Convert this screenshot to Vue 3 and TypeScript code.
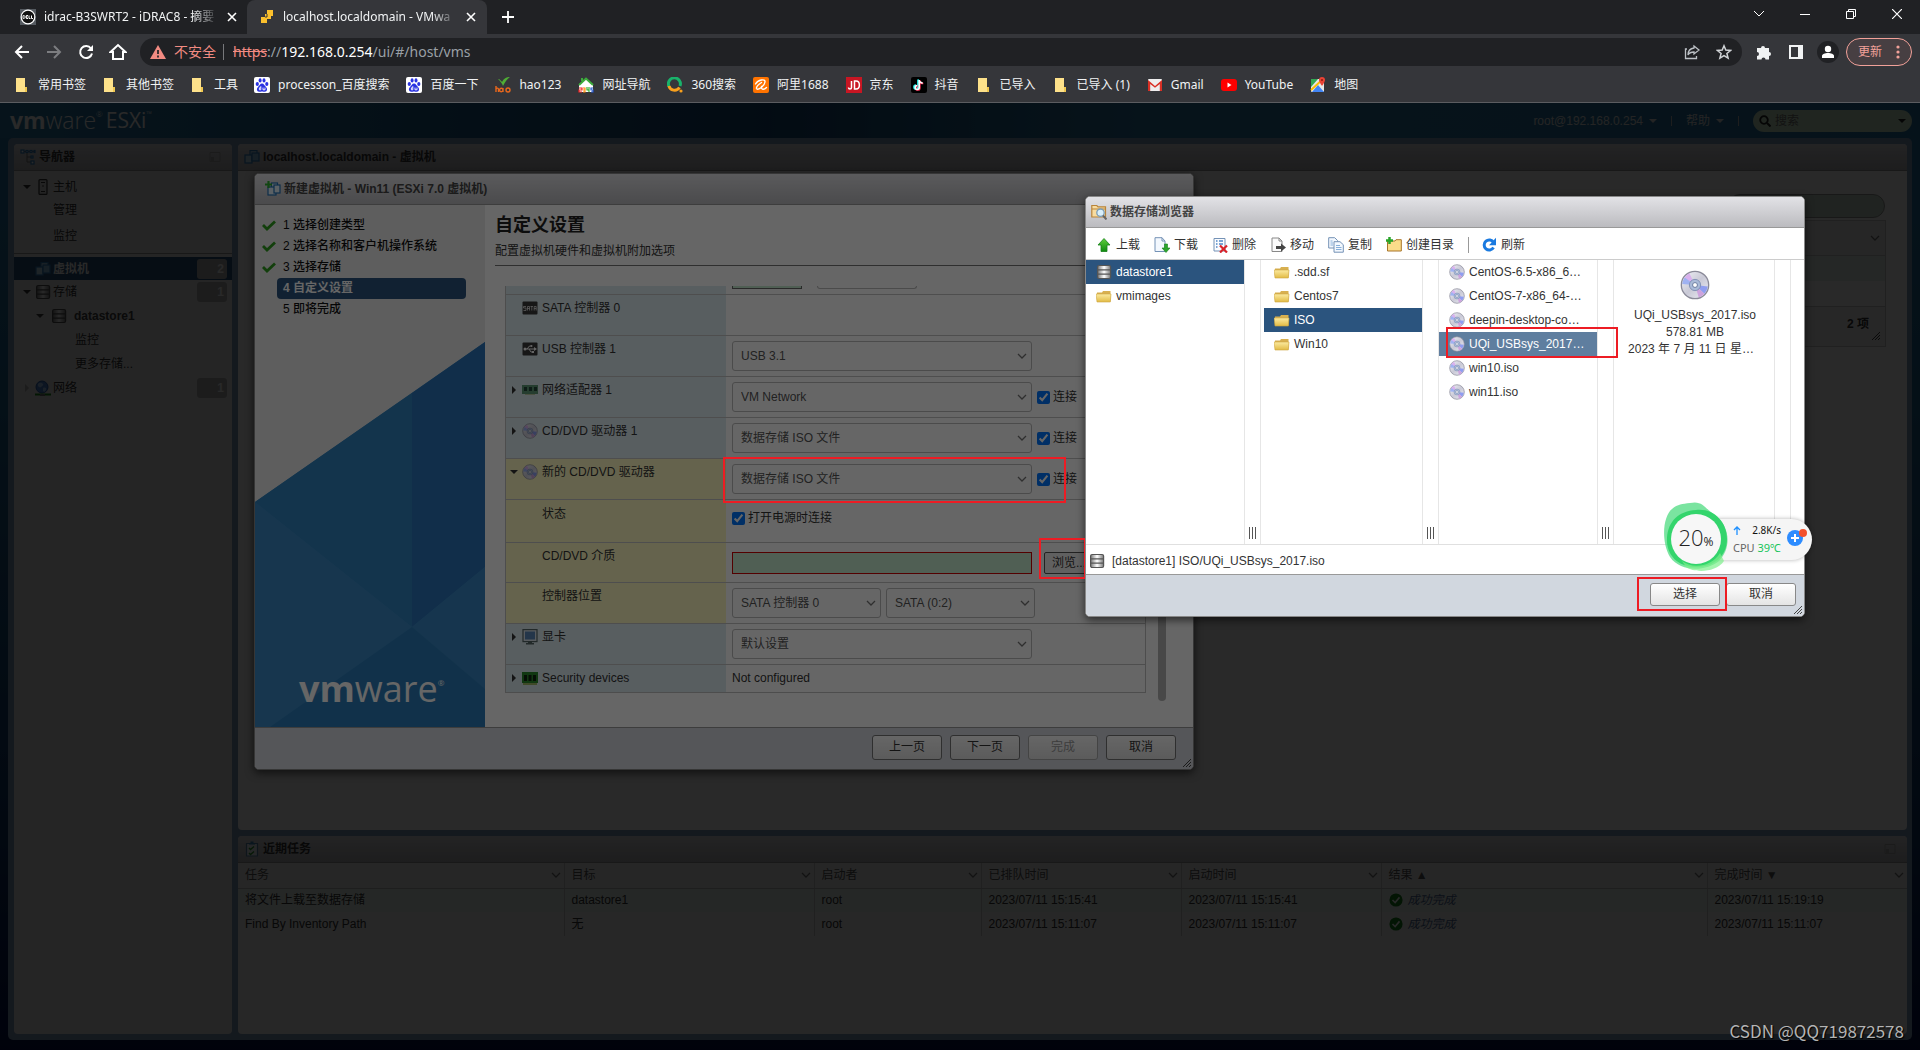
<script setup lang="ts">
import { ref } from 'vue'

interface Bookmark { icon: string; label: string }
interface Step { label: string; state: 'done' | 'active' | 'next' }
interface Task { name: string; target: string; user: string; queued: string; started: string; finished: string; tint: boolean }
interface Entry { label: string; icon: string; state?: string }

const bookmarks: Bookmark[] = [
  { icon: 'bm-folder', label: '常用书签' },
  { icon: 'bm-folder', label: '其他书签' },
  { icon: 'bm-folder', label: '工具' },
  { icon: 'bm-baidu', label: 'processon_百度搜索' },
  { icon: 'bm-baidu', label: '百度一下' },
  { icon: 'bm-hao', label: 'hao123' },
  { icon: 'bm-2345', label: '网址导航' },
  { icon: 'bm-360', label: '360搜索' },
  { icon: 'bm-ali', label: '阿里1688' },
  { icon: 'bm-jd', label: '京东' },
  { icon: 'bm-douyin', label: '抖音' },
  { icon: 'bm-folder', label: '已导入' },
  { icon: 'bm-folder', label: '已导入 (1)' },
  { icon: 'bm-gmail', label: 'Gmail' },
  { icon: 'bm-youtube', label: 'YouTube' },
  { icon: 'bm-maps', label: '地图' }
]

const steps: Step[] = [
  { label: '1 选择创建类型', state: 'done' },
  { label: '2 选择名称和客户机操作系统', state: 'done' },
  { label: '3 选择存储', state: 'done' },
  { label: '4 自定义设置', state: 'active' },
  { label: '5 即将完成', state: 'next' }
]

const tasks: Task[] = [
  { name: '将文件上载至数据存储', target: 'datastore1', user: 'root', queued: '2023/07/11 15:15:41', started: '2023/07/11 15:15:41', finished: '2023/07/11 15:19:19', tint: true },
  { name: 'Find By Inventory Path', target: '无', user: 'root', queued: '2023/07/11 15:11:07', started: '2023/07/11 15:11:07', finished: '2023/07/11 15:11:07', tint: false }
]

const taskColumns = [
  { label: '任务', cls: 'c-name' },
  { label: '目标', cls: 'c-target' },
  { label: '启动者', cls: 'c-user' },
  { label: '已排队时间', cls: 'c-time' },
  { label: '启动时间', cls: 'c-time' },
  { label: '结果 ▲', cls: 'c-result' },
  { label: '完成时间 ▼', cls: 'c-time' }
]

const tools = [
  { icon: 'i-upload', label: '上载' },
  { icon: 'i-download', label: '下载' },
  { icon: 'i-delete', label: '删除' },
  { icon: 'i-move', label: '移动' },
  { icon: 'i-copy', label: '复制' },
  { icon: 'i-newdir', label: '创建目录' }
]

const stores: Entry[] = [
  { label: 'datastore1', icon: 'i-store', state: 'picked' },
  { label: 'vmimages', icon: 'i-folder' }
]
const folders: Entry[] = [
  { label: '.sdd.sf', icon: 'i-folder' },
  { label: 'Centos7', icon: 'i-folder' },
  { label: 'ISO', icon: 'i-folder', state: 'picked' },
  { label: 'Win10', icon: 'i-folder' }
]
const files: Entry[] = [
  { label: 'CentOS-6.5-x86_6…', icon: 'i-disc' },
  { label: 'CentOS-7-x86_64-…', icon: 'i-disc' },
  { label: 'deepin-desktop-co…', icon: 'i-disc' },
  { label: 'UQi_USBsys_2017…', icon: 'i-disc', state: 'current' },
  { label: 'win10.iso', icon: 'i-disc' },
  { label: 'win11.iso', icon: 'i-disc' }
]

const netOn = ref(true)
const cdOn = ref(true)
const newCdOn = ref(true)
const powerOn = ref(true)
const media = ref('')
const search = ref('')
</script>

<template>
  <div class="screen">
    <svg class="sprite" width="0" height="0" aria-hidden="true">
      <defs>
        <linearGradient id="g-disc" x1="0" y1="0" x2="1" y2="1">
          <stop offset="0" stop-color="#f4f4f8" /><stop offset=".5" stop-color="#c9c9d6" /><stop offset="1" stop-color="#eeeef6" />
        </linearGradient>
        <linearGradient id="g-folder" x1="0" y1="0" x2="0" y2="1">
          <stop offset="0" stop-color="#fbeaa0" /><stop offset="1" stop-color="#e2bb45" />
        </linearGradient>
        <linearGradient id="g-metal" x1="0" y1="0" x2="1" y2="0">
          <stop offset="0" stop-color="#777" /><stop offset=".5" stop-color="#fff" /><stop offset="1" stop-color="#777" />
        </linearGradient>
        <linearGradient id="g-green" x1="0" y1="0" x2="0" y2="1">
          <stop offset="0" stop-color="#5fd03c" /><stop offset="1" stop-color="#108a10" />
        </linearGradient>
      </defs>
      <symbol id="bm-folder" viewBox="0 0 16 16"><path d="M2 1h9v9h2v5H2z" fill="#fde18a" /><path d="M11 10h2v5h-2z" fill="#f0c850" /></symbol>
      <symbol id="bm-baidu" viewBox="0 0 16 16"><rect width="16" height="16" rx="2" fill="#fff" /><g fill="#2932e1"><ellipse cx="3.3" cy="7" rx="1.6" ry="2.1" /><ellipse cx="6.1" cy="3.4" rx="1.5" ry="2.1" /><ellipse cx="10" cy="3.4" rx="1.5" ry="2.1" /><ellipse cx="12.8" cy="7" rx="1.6" ry="2.1" /><path d="M8 6.6c2 0 2.300 2 4 3.400 1.800 1.600 1.300 4.600-1.200 4.800-1.200.1-1.600-.3-2.800-.3s-1.600.4-2.800.3c-2.500-.2-3-3.200-1.200-4.800C5.700 8.600 6 6.600 8 6.600z" /></g><path d="M6.800 9.200v3.600H5.400v-2h1.400M9 10.600v2.200h2v-2.200" fill="none" stroke="#fff" stroke-width=".9" /></symbol>
      <symbol id="bm-hao" viewBox="0 0 16 16"><path d="M3 2c2 0 3 2 4 3 2-4 5-5 8-5-3 2-5 5-7 9-1-3-3-5-5-7z" fill="#4fae35" /><path d="M1 9v6m0-3c1-1.500 2.500-1 2.500.5V15M8 15v-4m0 2a1.700 1.700 0 1 1-3.400 0 1.700 1.700 0 0 1 3.400 0zM15 13a2 2 0 1 1-4 0 2 2 0 0 1 4 0z" fill="none" stroke="#e8671c" stroke-width="1.400" /></symbol>
      <symbol id="bm-2345" viewBox="0 0 16 16"><path d="M8 1l7 7v7H1V8z" fill="#fff" /><path d="M1 8l7-6.500L15 8" fill="none" stroke="#3cab3c" stroke-width="2" /><path d="M3 1h2v3H3z" fill="#3cab3c" /><path d="M1 11h3v2H1v2h3" fill="none" stroke="#e22" stroke-width="1.200" /><path d="M5 11h2v4H5m0-2h2" fill="none" stroke="#f80" stroke-width="1.100" /><path d="M9 10v3h2m0-3v5" fill="none" stroke="#2a2" stroke-width="1.100" /><path d="M15 11h-2v2h2v2h-2" fill="none" stroke="#25c" stroke-width="1.200" /></symbol>
      <symbol id="bm-360" viewBox="0 0 16 16"><path d="M2 9.500A6 6 0 1 1 13 9" fill="none" stroke="#19b36b" stroke-width="3" /><path d="M2 9c1 4.500 7.500 6 10.500 1.500" fill="none" stroke="#f8a01d" stroke-width="3" /><circle cx="14" cy="14" r="1.600" fill="#f8a01d" /></symbol>
      <symbol id="bm-ali" viewBox="0 0 16 16"><rect width="16" height="16" rx="2" fill="#ff7300" /><path d="M2.500 7C5 2.500 12.500 1.500 12 5c-.5 4-7.500 9-8.500 6.500C3 9 8.500 5.500 8.500 5.500M8.500 9.500c-.5 3.500 2.500 3.500 5 1" fill="none" stroke="#fff" stroke-width="1.400" stroke-linecap="round" /></symbol>
      <symbol id="bm-jd" viewBox="0 0 16 16"><rect width="16" height="16" fill="#c81623" /><path d="M5.500 4v6.500c0 2-3 2-3 0M8.500 4v8h1.500c4.500 0 4.500-8 0-8z" fill="none" stroke="#fff" stroke-width="1.500" /></symbol>
      <symbol id="bm-douyin" viewBox="0 0 16 16"><rect width="16" height="16" rx="2" fill="#000" /><path d="M7.500 3v7.500a2 2 0 1 1-2-2M7.500 3c.3 2 2 3 3.500 3" transform="translate(-.5 -.5)" fill="none" stroke="#25f4ee" stroke-width="1.700" /><path d="M8.500 3v7.500a2 2 0 1 1-2-2M8.500 3c.3 2 2 3 3.500 3" transform="translate(.3 .5)" fill="none" stroke="#fe2c55" stroke-width="1.700" /><path d="M8.200 3v7.500a2 2 0 1 1-2-2M8.200 3c.3 2 2 3 3.500 3" fill="none" stroke="#fff" stroke-width="1.600" /></symbol>
      <symbol id="bm-gmail" viewBox="0 0 16 16"><rect x="1" y="2" width="14" height="12" rx="1" fill="#eee" /><path d="M1 3l7 6 7-6v11h-2.200V7L8 10.800 3.200 7v7H1z" fill="#d93025" /></symbol>
      <symbol id="bm-youtube" viewBox="0 0 16 16"><rect x="0" y="2" width="16" height="12" rx="3" fill="#f00" /><path d="M6.500 5.500v5l4-2.500z" fill="#fff" /></symbol>
      <symbol id="bm-maps" viewBox="0 0 16 16"><rect x="1" y="2" width="13" height="13" rx="1" fill="#e8e8e8" /><path d="M1 2h7L1 10z" fill="#34a853" /><path d="M2 15l6-7 6 7z" fill="#4285f4" /><path d="M1 13L12 3" stroke="#fbbc04" stroke-width="2" /><path d="M12 0a3 3 0 0 1 3 3c0 2-3 6-3 6S9 5 9 3a3 3 0 0 1 3-3z" fill="#ea4335" /><circle cx="12" cy="3" r="1" fill="#8c1a11" /></symbol>
      <symbol id="i-chev" viewBox="0 0 10 10"><path d="M1 3l4 4 4-4" fill="none" stroke="#777" stroke-width="1.300" /></symbol>
      <symbol id="i-down" viewBox="0 0 8 8"><path d="M0 2h8L4 6z" fill="currentColor" /></symbol>
      <symbol id="i-right" viewBox="0 0 8 8"><path d="M2 0v8l4-4z" fill="currentColor" /></symbol>
      <symbol id="i-vms" viewBox="0 0 16 16"><g fill="#bfe0f5" stroke="#2f80c0" stroke-width="1.200"><rect x="6" y="1.600" width="7" height="7" /><rect x="1" y="6" width="7" height="8" /><rect x="8" y="4" width="7" height="8" fill="#8cc4ea" /></g></symbol>
      <symbol id="i-newvm" viewBox="0 0 16 16"><g fill="#e3f2fc" stroke="#2272b8" stroke-width="1.200"><rect x="6.500" y="2" width="6" height="7" /><rect x="3" y="6" width="8" height="8" /><rect x="9" y="4" width="6" height="8" /></g><path d="M3.500 0v7M0 3.500h7" stroke="#2fb02f" stroke-width="2.200" /></symbol>
      <symbol id="i-tree" viewBox="0 0 16 16"><path d="M4 2.500h10M7 3v10h4M7 8h4" fill="none" stroke="#777" /><g fill="#fff" stroke="#2f80c0" stroke-width="1.200"><rect x="1" y="1" width="3" height="3" /><rect x="6" y="1.500" width="2" height="2" /><rect x="10" y="1.500" width="2" height="2" /><rect x="14" y="1.500" width="1" height="2" /><rect x="11" y="7" width="2" height="2" /><rect x="11" y="12" width="3" height="3" /></g></symbol>
      <symbol id="i-host" viewBox="0 0 16 16"><rect x="4" y=".6" width="8" height="14.800" rx="1" fill="#ddd" stroke="#333" stroke-width="1.200" /><path d="M6 3.500h4" stroke="#333" /><circle cx="8" cy="7" r=".8" fill="#333" /><path d="M6 12.500h4" stroke="#333" /></symbol>
      <symbol id="i-store" viewBox="0 0 16 16"><rect x="1.600" y="1.500" width="13" height="13" rx="1.500" fill="url(#g-metal)" stroke="#555" stroke-width="1.200" /><path d="M2 5.800h12M2 10.200h12" stroke="#555" stroke-width="1.200" /></symbol>
      <symbol id="i-globe" viewBox="0 0 16 16"><circle cx="7" cy="7" r="6" fill="#4c86d8" stroke="#2a5cab" /><path d="M3 4c2-2 4-1 5 0s-1 2-2 3-2 0-3-1zM8 8c2-1 4 0 3 2s-2 2-3 1z" fill="#a9cdf5" /><path d="M0 14.500h16" stroke="#178f17" stroke-width="2" /><path d="M5 14h5v2H5z" fill="#777" /></symbol>
      <symbol id="i-sata" viewBox="0 0 16 16"><rect x=".5" y="1.500" width="15" height="13" rx="1" fill="#3a3a3a" /><path d="M4 6.500H1.500V8H4v2.500H1.500M5.500 10.500v-4h2v4M5.500 8.500h2M8.500 6.500H11M9.800 6.500v4M12.200 10.500v-4h2v4M12.200 8.500h2" fill="none" stroke="#fff" stroke-width=".7" /></symbol>
      <symbol id="i-usb" viewBox="0 0 16 16"><rect x=".5" y="1.500" width="15" height="13" rx="1" fill="#3a3a3a" /><path d="M2 8h11M5 8l2.500-3H9M7 8l2 3h2" fill="none" stroke="#fff" /><circle cx="3" cy="8" r="1.500" fill="#fff" /><path d="M12 6l3 2-3 2z" fill="#fff" /><circle cx="9.500" cy="5" r="1" fill="#fff" /><path d="M10 10h2v2h-2z" fill="#fff" /></symbol>
      <symbol id="i-nic" viewBox="0 0 16 16"><path d="M0 3h16v9H0z" fill="#5d9a75" /><path d="M2 5h3v4H2zM7 5h3v4H7zM12 5h3v4h-3z" fill="#24463a" /><path d="M3 12h10v1H3z" fill="#b9c9a0" /></symbol>
      <symbol id="i-mem" viewBox="0 0 16 16"><path d="M0 2h16v11H0z" fill="#2c8a2c" /><path d="M2 5h3v6H2zM6.500 5h3v6h-3zM11 5h3v6h-3z" fill="#10240f" /><path d="M1 14h14" stroke="#8ca838" stroke-width="1.500" /></symbol>
      <symbol id="i-monitor" viewBox="0 0 16 16"><rect x="1" y=".6" width="14" height="12" fill="#dce4ec" stroke="#566" stroke-width="1.200" /><rect x="3" y="2.500" width="10" height="8" fill="#5a88b8" /><path d="M6 12.500h4V14h2v1.500H4V14h2z" fill="#566" /></symbol>
      <symbol id="i-disc" viewBox="0 0 16 16"><circle cx="8" cy="8" r="7.300" fill="url(#g-disc)" stroke="#8a8a98" stroke-width=".7" /><path d="M8 8L2 4.500A7 7 0 0 1 5 1.700z" fill="#d9b1ee" /><path d="M8 8L1.200 7.500A7 7 0 0 1 2.500 4z" fill="#9fb2f2" /><path d="M8 8l6.800.8A7 7 0 0 1 13 12.700z" fill="#8f9df0" /><path d="M8 8l5 4.700A7 7 0 0 1 10 14.700z" fill="#cda3dd" /><circle cx="8" cy="8" r="3" fill="#a9bad8" stroke="#8090b4" stroke-width=".5" /><circle cx="8" cy="8" r="1.300" fill="#fff" stroke="#66779c" stroke-width=".5" /></symbol>
      <symbol id="i-folder" viewBox="0 0 16 16"><path d="M1 4.500h5l1-1.500h7.500v10.500H1z" fill="#d8b050" /><path d="M0 6h15l-.7 8H1z" fill="url(#g-folder)" stroke="#cfa640" stroke-width=".6" /></symbol>
      <symbol id="i-check" viewBox="0 0 14 14"><path d="M1 6l4 4 8-7.500" fill="none" stroke="#2f9e1e" stroke-width="2.800" /></symbol>
      <symbol id="i-ok" viewBox="0 0 16 16"><circle cx="8" cy="8" r="7.500" fill="#18841c" /><path d="M4 8l3 3 5-6" fill="none" stroke="#fff" stroke-width="1.800" /></symbol>
      <symbol id="i-tasks" viewBox="0 0 16 16"><path d="M2.500 2.500h11v12.500h-11z" fill="#eef4fa" stroke="#5a86ac" stroke-width="1.200" /><path d="M5 3.500h6V2H9.500V.5h-3V2H5z" fill="#3a86c0" /><path d="M5 7l1.500 1.500L10 5.500M5 12l1.500 1.500L10 10.500" fill="none" stroke="#2c9a2c" stroke-width="1.400" /></symbol>
      <symbol id="i-browse" viewBox="0 0 16 16"><path d="M.8 13V1.500h5l1.200 1.300h7.500V13z" fill="#f8dca0" stroke="#b8843a" stroke-width="1.200" /><path d="M1 5h13" stroke="#b8843a" /><circle cx="9.500" cy="8.700" r="3.700" fill="#d8effb" stroke="#7b9cb5" stroke-width="1.300" /><path d="M12 11.500l3.500 4" stroke="#666" stroke-width="2" /></symbol>
      <symbol id="i-upload" viewBox="0 0 16 16"><path d="M8 1.500l6 6.500h-3v6.500H5V8H2z" fill="url(#g-green)" stroke="#18801a" stroke-width=".8" /></symbol>
      <symbol id="i-download" viewBox="0 0 16 16"><path d="M1 .7h7l3 3.300v10.500H1z" fill="#f3f8fe" stroke="#7492b6" /><path d="M8 .7V4h3" fill="none" stroke="#7492b6" /><path d="M10.500 7h3v4H16l-4 4.500L8 11h2.500z" fill="#2ca52c" stroke="#17801a" stroke-width=".6" /></symbol>
      <symbol id="i-delete" viewBox="0 0 16 16"><path d="M2 1.500h11V14H2z" fill="#fafcff" stroke="#7492b6" /><path d="M4 4h1.500M7 4h4M4 7h1.500M7 7h4M4 10h1.500" stroke="#4f86c6" stroke-width="1.300" /><path d="M8 8.500l7 7m0-7l-7 7" stroke="#d8232a" stroke-width="2.200" /></symbol>
      <symbol id="i-move" viewBox="0 0 16 16"><path d="M2 1h7l3 3v10.500H2z" fill="#fafafa" stroke="#888" /><path d="M9 1v3h3" fill="none" stroke="#888" /><path d="M6 9h5V6.500l5 4-5 4V12H6z" fill="#444" /></symbol>
      <symbol id="i-copy" viewBox="0 0 16 16"><path d="M.7.700h6l3 3V11h-9z" fill="#f3f8fe" stroke="#7492b6" /><path d="M6 4.700h6l3.300 3v7.500H6z" fill="#f3f8fe" stroke="#7492b6" /><path d="M8 8.500h4M8 10.500h5.500M8 12.500h5.500M2.500 4h2M2.500 6h2.500M2.500 8h2.500" stroke="#7aa6d6" stroke-width=".9" /></symbol>
      <symbol id="i-newdir" viewBox="0 0 16 16"><path d="M1.500 14V4H9l1-1.300h5.300V14z" fill="#fbdc8a" stroke="#a8752a" /><path d="M3.500 0v7M0 3.500h7" stroke="#28a428" stroke-width="2.500" /></symbol>
      <symbol id="i-refresh" viewBox="0 0 16 16"><path d="M12.500 10.500a5 5 0 1 1 0-5" fill="none" stroke="#1a7ae0" stroke-width="3" /><path d="M15 .8v7.400H8z" fill="#1a7ae0" /></symbol>
      <symbol id="i-panel" viewBox="0 0 12 12"><path d="M1 1.500h10v9H1z" fill="none" stroke="#aaa" /><path d="M2 6h3v4H2z" fill="#aaa" /></symbol>
      <symbol id="i-grip" viewBox="0 0 8 8"><path d="M0 8l8-8M3 8l5-5M6 8l2-2" stroke="#444" fill="none" /></symbol>
    </svg>

    <header class="browser">
      <div class="tabs">
        <div class="tab">
          <svg width="16" height="16" viewBox="0 0 16 16"><rect width="16" height="16" fill="#555a60" /><circle cx="8" cy="8" r="6.800" fill="#111" stroke="#fff" stroke-width="1.200" /><path d="M3 6.500v3h.6c2 0 2-3 0-3zM8 6.500H6.300v3H8M6.300 8h1.400M9 6.500v3h1.500M11.500 6.500v3H13" fill="none" stroke="#fff" stroke-width="1" /></svg>
          <span class="tab-title">idrac-B3SWRT2 - iDRAC8 - 摘要</span>
          <button class="plain" aria-label="关闭标签页"><svg width="10" height="10" viewBox="0 0 10 10"><path d="M1 1l8 8m0-8L1 9" stroke="#fff" stroke-width="1.600" /></svg></button>
        </div>
        <div class="tab current">
          <svg width="16" height="16" viewBox="0 0 16 16"><path d="M8 1h6v6h-2v3H8v4H2V8h4V5h2z" fill="#fbc02d" /><path d="M8 5v3H6" fill="none" stroke="#35363a" /></svg>
          <span class="tab-title">localhost.localdomain - VMwa</span>
          <button class="plain" aria-label="关闭标签页"><svg width="10" height="10" viewBox="0 0 10 10"><path d="M1 1l8 8m0-8L1 9" stroke="#fff" stroke-width="1.600" /></svg></button>
        </div>
        <button class="plain plus" aria-label="新标签页"><svg width="12" height="12" viewBox="0 0 12 12"><path d="M6 0v12M0 6h12" stroke="#fff" stroke-width="1.800" /></svg></button>
        <div class="window-buttons">
          <button class="plain" aria-label="搜索标签页"><svg width="10" height="10" viewBox="0 0 10 10"><path d="M0 2l5 5 5-5" fill="none" stroke="#fff" /></svg></button>
          <button class="plain" aria-label="最小化"><svg width="10" height="10" viewBox="0 0 10 10"><path d="M0 5.500h10" stroke="#fff" /></svg></button>
          <button class="plain" aria-label="还原"><svg width="10" height="10" viewBox="0 0 10 10"><path d="M.5 2.500h7v7h-7zM2.500 2.500v-2h7v7h-2" fill="none" stroke="#fff" /></svg></button>
          <button class="plain" aria-label="关闭"><svg width="10" height="10" viewBox="0 0 10 10"><path d="M0 0l10 10M10 0L0 10" stroke="#fff" stroke-width="1.200" /></svg></button>
        </div>
      </div>
      <div class="toolbar">
        <div class="nav-buttons">
          <button class="plain" aria-label="后退"><svg width="16" height="16" viewBox="0 0 16 16"><path d="M15 8H2M8 2L2 8l6 6" fill="none" stroke="#fff" stroke-width="2" /></svg></button>
          <button class="plain" aria-label="前进"><svg width="16" height="16" viewBox="0 0 16 16"><path d="M1 8h13M8 2l6 6-6 6" fill="none" stroke="#7c7d80" stroke-width="2" /></svg></button>
          <button class="plain" aria-label="重新加载"><svg width="16" height="16" viewBox="0 0 16 16"><path d="M13 4.500A6 6 0 1 0 14 9.500" fill="none" stroke="#fff" stroke-width="2" /><path d="M15 1v6H9z" fill="#fff" /></svg></button>
          <button class="plain" aria-label="主页"><svg width="18" height="18" viewBox="0 0 18 18"><path d="M1.500 9L9 2l7.500 7H14v7H4V9z" fill="none" stroke="#fff" stroke-width="2" /></svg></button>
        </div>
        <div class="omnibox">
          <svg width="16" height="16" viewBox="0 0 16 16"><path d="M8 1l8 14H0z" fill="#f28b82" /><path d="M8 6v4M8 11.500v2" stroke="#202124" stroke-width="1.700" /></svg>
          <span class="insecure">不安全</span>
          <span class="url"><s>https</s>://<b>192.168.0.254</b>/ui/#/host/vms</span>
          <button class="plain share" aria-label="分享"><svg width="16" height="16" viewBox="0 0 16 16"><path d="M3 5H1.500v9.500h11V12" fill="none" stroke="#bdc1c6" stroke-width="1.300" /><path d="M10 2l5 4-5 4V8C7 8 5 9 4 11c0-4 2-6.500 6-7z" fill="none" stroke="#bdc1c6" stroke-width="1.300" /></svg></button>
          <button class="plain" aria-label="为此标签页添加书签"><svg width="16" height="16" viewBox="0 0 16 16"><path d="M8 1.800l1.800 4.300 4.700.4-3.600 3 1.200 4.600L8 11.600l-4.100 2.500 1.200-4.600-3.600-3 4.700-.4z" fill="none" stroke="#d0d3d6" stroke-width="1.500" /></svg></button>
        </div>
        <button class="plain ext" aria-label="扩展程序"><svg width="16" height="16" viewBox="0 0 16 16"><path d="M1 4h4a2 2 0 1 1 4 0h4v4a2 2 0 1 1 0 4v3.500H9.500a2 2 0 1 0-4 0H1V12a2 2 0 1 0 0-4z" fill="#f1f3f4" /></svg></button>
        <button class="plain ext" aria-label="侧边栏"><svg width="14" height="14" viewBox="0 0 14 14"><path d="M1 1h12v12H1z" fill="none" stroke="#f1f3f4" stroke-width="2" /><path d="M9 1h4v12H9z" fill="#f1f3f4" /></svg></button>
        <button class="plain avatar" aria-label="个人资料"><svg width="22" height="22" viewBox="0 0 22 22"><circle cx="11" cy="11" r="11" fill="#202124" /><circle cx="11" cy="8" r="3.200" fill="#fff" /><path d="M5 17v-2c0-4 12-4 12 0v2z" fill="#fff" /></svg></button>
        <button class="update">更新<svg width="4" height="14" viewBox="0 0 4 14"><g fill="#f2a199"><circle cx="2" cy="2" r="1.600" /><circle cx="2" cy="7" r="1.600" /><circle cx="2" cy="12" r="1.600" /></g></svg></button>
      </div>
      <nav class="bookmarks">
        <a v-for="(b, i) in bookmarks" :key="i" href="#"><svg width="16" height="16"><use :href="'#' + b.icon" /></svg>{{ b.label }}</a>
      </nav>
    </header>

    <main class="app">
      <div class="topbar">
        <div class="brand"><b>vm</b>ware<sup>®</sup><span>ESXi</span><sup>™</sup></div>
        <div class="account">
          <a href="#">root@192.168.0.254<svg width="8" height="8"><use href="#i-down" /></svg></a>
          <a href="#">帮助<svg width="8" height="8"><use href="#i-down" /></svg></a>
          <label class="search"><svg width="12" height="12" viewBox="0 0 12 12"><circle cx="5" cy="5" r="3.800" fill="none" stroke="#222" stroke-width="1.800" /><path d="M8 8l3.500 3.500" stroke="#222" stroke-width="2" /></svg>
            <input v-model="search" type="text" placeholder="搜索" aria-label="搜索" /><svg width="8" height="8"><use href="#i-down" /></svg></label>
        </div>
      </div>

      <div class="workspace">
        <aside class="panel navigator">
          <h2><svg width="16" height="16"><use href="#i-tree" /></svg>导航器<svg class="pin" width="12" height="12"><use href="#i-panel" /></svg></h2>
          <ul class="tree host-tree">
            <li class="row-a"><svg width="8" height="8"><use href="#i-down" /></svg><svg width="16" height="16"><use href="#i-host" /></svg>主机</li>
            <li class="leaf">管理</li>
            <li class="leaf last">监控</li>
          </ul>
          <ul class="tree">
            <li class="row-a chosen"><i class="nub"></i><svg width="16" height="16"><use href="#i-vms" /></svg>虚拟机<span class="badge">2</span></li>
            <li class="row-a"><svg width="8" height="8"><use href="#i-down" /></svg><svg width="16" height="16"><use href="#i-store" /></svg>存储<span class="badge">1</span></li>
            <li class="row-b"><svg width="8" height="8"><use href="#i-down" /></svg><svg width="16" height="16"><use href="#i-store" /></svg>datastore1</li>
            <li class="deep">监控</li>
            <li class="deep">更多存储...</li>
            <li class="row-a"><svg class="faint" width="8" height="8"><use href="#i-right" /></svg><svg width="16" height="16"><use href="#i-globe" /></svg>网络<span class="badge">1</span></li>
          </ul>
        </aside>

        <div class="center">
          <section class="panel vm-panel">
            <h2><svg width="16" height="16"><use href="#i-vms" /></svg>localhost.localdomain - 虚拟机</h2>
            <div class="vm-body">
              <div class="vm-search"></div>
              <div class="vm-grid">
                <div class="vm-head"><svg width="10" height="10"><use href="#i-chev" /></svg></div>
                <div class="vm-row tint"></div>
                <div class="vm-row"></div>
                <div class="vm-foot">2 项<svg width="8" height="8"><use href="#i-grip" /></svg></div>
              </div>
            </div>
          </section>

          <section class="panel tasks">
            <h2><svg width="16" height="16"><use href="#i-tasks" /></svg>近期任务<svg class="pin" width="12" height="12"><use href="#i-panel" /></svg></h2>
            <table>
              <thead>
                <tr><th v-for="c in taskColumns" :key="c.label" :class="c.cls"><span>{{ c.label }}<svg width="10" height="10"><use href="#i-chev" /></svg></span></th></tr>
              </thead>
              <tbody>
                <tr v-for="t in tasks" :key="t.name" :class="{ tint: t.tint }">
                  <td>{{ t.name }}</td><td>{{ t.target }}</td><td>{{ t.user }}</td><td>{{ t.queued }}</td><td>{{ t.started }}</td>
                  <td><span class="result"><svg width="14" height="14"><use href="#i-ok" /></svg><em>成功完成</em></span></td>
                  <td>{{ t.finished }}</td>
                </tr>
              </tbody>
            </table>
          </section>
        </div>
      </div>

      <div class="veil"></div>

      <section class="window wizard" aria-label="新建虚拟机">
        <h2 class="title"><svg width="16" height="16"><use href="#i-newvm" /></svg>新建虚拟机 - Win11 (ESXi 7.0 虚拟机)</h2>
        <div class="wizard-body">
          <div class="steps">
            <svg class="art" viewBox="0 0 230 522" preserveAspectRatio="none">
              <path d="M0 297L230 137V522H0z" fill="#3b8cc8" />
              <path d="M0 297L157 188V422z" fill="#3182bd" />
              <path d="M0 297V522h15L157 422z" fill="#3a88c4" />
              <path d="M157 188L230 137V362L157 422z" fill="#2b74b8" />
              <path d="M157 422L230 362V484z" fill="#3785c2" />
              <path d="M157 422L230 484V522H15z" fill="#2c7cb8" />
            </svg>
            <ol>
              <li v-for="s in steps" :key="s.label" :class="s.state"><svg v-if="s.state === 'done'" width="14" height="14"><use href="#i-check" /></svg><i v-else class="gap"></i><span>{{ s.label }}</span></li>
            </ol>
            <div class="art-logo"><b>vm</b>ware<sup>®</sup></div>
          </div>

          <div class="settings">
            <h3>自定义设置</h3>
            <p>配置虚拟机硬件和虚拟机附加选项</p>
            <div class="scroller">
              <div class="grid">
                <div class="row cut"><div class="name"></div><div class="value"><i class="cut-field"></i><i class="cut-select"></i></div></div>
                <div class="row"><div class="name"><i class="nub"></i><svg width="16" height="16"><use href="#i-sata" /></svg>SATA 控制器 0</div><div class="value"></div></div>
                <div class="row"><label class="name" for="usb"><i class="nub"></i><svg width="16" height="16"><use href="#i-usb" /></svg>USB 控制器 1</label><div class="value"><span class="pick wide"><select id="usb"><option>USB 3.1</option></select><svg width="10" height="10"><use href="#i-chev" /></svg></span></div></div>
                <div class="row"><label class="name" for="net"><svg width="8" height="8"><use href="#i-right" /></svg><svg width="16" height="16"><use href="#i-nic" /></svg>网络适配器 1</label><div class="value"><span class="pick wide"><select id="net"><option>VM Network</option></select><svg width="10" height="10"><use href="#i-chev" /></svg></span><label class="tick"><input v-model="netOn" type="checkbox" />连接</label></div></div>
                <div class="row"><label class="name" for="cd"><svg width="8" height="8"><use href="#i-right" /></svg><svg width="16" height="16"><use href="#i-disc" /></svg>CD/DVD 驱动器 1</label><div class="value"><span class="pick wide"><select id="cd"><option>数据存储 ISO 文件</option></select><svg width="10" height="10"><use href="#i-chev" /></svg></span><label class="tick"><input v-model="cdOn" type="checkbox" />连接</label></div></div>
                <div class="row fresh"><label class="name" for="newcd"><svg width="8" height="8"><use href="#i-down" /></svg><svg width="16" height="16"><use href="#i-disc" /></svg>新的 CD/DVD 驱动器</label><div class="value"><span class="pick wide"><select id="newcd"><option>数据存储 ISO 文件</option></select><svg width="10" height="10"><use href="#i-chev" /></svg></span><label class="tick"><input v-model="newCdOn" type="checkbox" />连接</label></div></div>
                <div class="row fresh status"><div class="name sub">状态</div><div class="value"><label class="tick power"><input v-model="powerOn" type="checkbox" />打开电源时连接</label></div></div>
                <div class="row fresh medium"><label class="name sub" for="media">CD/DVD 介质</label><div class="value"><input id="media" v-model="media" class="media" type="text" /><button class="browse">浏览...</button></div></div>
                <div class="row fresh"><label class="name sub" for="ctrl">控制器位置</label><div class="value"><span class="pick half"><select id="ctrl"><option>SATA 控制器 0</option></select><svg width="10" height="10"><use href="#i-chev" /></svg></span><span class="pick half"><select aria-label="控制器端口"><option>SATA (0:2)</option></select><svg width="10" height="10"><use href="#i-chev" /></svg></span></div></div>
                <div class="row"><label class="name" for="gpu"><svg width="8" height="8"><use href="#i-right" /></svg><svg width="16" height="16"><use href="#i-monitor" /></svg>显卡</label><div class="value"><span class="pick wide"><select id="gpu"><option>默认设置</option></select><svg width="10" height="10"><use href="#i-chev" /></svg></span></div></div>
                <div class="row short"><div class="name"><svg width="8" height="8"><use href="#i-right" /></svg><svg width="16" height="16"><use href="#i-mem" /></svg>Security devices</div><div class="value">Not configured</div></div>
              </div>
              <div class="thumb"></div>
            </div>
          </div>
        </div>
        <footer class="actions">
          <button>上一页</button><button>下一页</button><button disabled>完成</button><button>取消</button>
        </footer>
        <svg class="resize" width="8" height="8"><use href="#i-grip" /></svg>
      </section>

      <div class="veil"></div>

      <section class="window picker" aria-label="数据存储浏览器">
        <h2 class="title"><svg width="16" height="16"><use href="#i-browse" /></svg>数据存储浏览器</h2>
        <div class="tools">
          <button v-for="t in tools" :key="t.label"><svg width="16" height="16"><use :href="'#' + t.icon" /></svg>{{ t.label }}</button>
          <i class="rule"></i>
          <button><svg width="16" height="16"><use href="#i-refresh" /></svg>刷新</button>
        </div>
        <div class="columns">
          <ul class="col"><li v-for="e in stores" :key="e.label"><button :class="e.state"><svg width="16" height="16"><use :href="'#' + e.icon" /></svg>{{ e.label }}</button></li></ul>
          <div class="grip"><i></i></div>
          <ul class="col inset"><li v-for="e in folders" :key="e.label"><button :class="e.state"><svg width="16" height="16"><use :href="'#' + e.icon" /></svg>{{ e.label }}</button></li></ul>
          <div class="grip"><i></i></div>
          <ul class="col"><li v-for="e in files" :key="e.label"><button :class="e.state"><svg width="16" height="16"><use :href="'#' + e.icon" /></svg>{{ e.label }}</button></li></ul>
          <div class="grip"><i></i></div>
          <div class="detail"><svg width="30" height="30"><use href="#i-disc" /></svg><span>UQi_USBsys_2017.iso</span><span>578.81 MB</span><span class="date">2023 年 7 月 11 日 星…</span></div>
          <div class="grip bare"></div>
        </div>
        <div class="path"><svg width="16" height="16"><use href="#i-store" /></svg>[datastore1] ISO/UQi_USBsys_2017.iso</div>
        <footer class="actions"><button>选择</button><button>取消</button></footer>
        <svg class="resize" width="8" height="8"><use href="#i-grip" /></svg>
      </section>

      <div class="mark mark-drive"></div>
      <div class="mark mark-browse"></div>
      <div class="mark mark-file"></div>
      <div class="mark mark-select"></div>

      <div class="monitor">
        <div class="stats">
          <div class="net"><svg width="8" height="9" viewBox="0 0 8 9"><path d="M4 9V1M1 4l3-3 3 3" fill="none" stroke="#1e90ff" stroke-width="1.300" /></svg>2.8K/s</div>
          <div class="cpu">CPU <b>39℃</b></div>
          <svg class="add" width="22" height="22" viewBox="0 0 22 22"><circle cx="10" cy="12" r="8" fill="#2d8cff" /><path d="M10 8v8M6 12h8" stroke="#fff" stroke-width="2" /><circle cx="18" cy="7" r="4" fill="#f4512c" /></svg>
        </div>
        <svg class="ball" width="68" height="72" viewBox="0 0 68 72">
          <path d="M28 2c13-3 15 6 25 12 16 12 16 34 4 46-12 10-38 12-49-4C-2 38 2 14 10 8 16 3 20 3 28 2z" fill="#4ddb80" opacity=".75" />
          <path d="M34 9c18-2 31 12 31 29S52 66 34 66 4 54 5 37 17 10 34 9z" fill="#2bd366" opacity=".9" />
          <path d="M20 60c10 8 30 6 38-8l4 8c-8 12-30 12-38 6z" fill="#7df08c" opacity=".7" />
          <circle cx="34" cy="38" r="25" fill="#f7f7f7" />
        </svg>
        <div class="load">20<small>%</small></div>
      </div>
      <div class="watermark">CSDN @QQ719872578</div>
    </main>
  </div>
</template>

<style>
body { margin: 0; background: #02040e; }
</style>

<style scoped>
* { box-sizing: border-box; }
.screen { min-height: 100vh; display: flex; flex-direction: column; font: 12px/16px "Liberation Sans", "Noto Sans CJK SC", sans-serif; color: #333; }
.sprite { position: absolute; }
svg { flex: none; display: block; }
ul, ol { list-style: none; margin: 0; padding: 0; }
h2, h3, p { margin: 0; }
a { color: inherit; text-decoration: none; }
button, select, input { font: inherit; color: inherit; }
.plain { border: 0; background: none; padding: 0; display: flex; align-items: center; justify-content: center; }

.browser { background: #35363a; border-bottom: 1px solid #5b5c60; color: #f1f3f4; font-family: "Noto Sans", "Noto Sans CJK SC", sans-serif; }
.tabs { display: flex; height: 34px; background: #202124; }
.tab { display: flex; align-items: center; gap: 8px; width: 247px; padding: 0 10px 0 20px; }
.tab.current { width: 240px; padding: 0 11px 0 12px; background: #35363a; border-radius: 8px 8px 0 0; }
.tab-title { flex: 1; overflow: hidden; white-space: nowrap; mask-image: linear-gradient(90deg, #000 85%, transparent); }
.plus { width: 42px; }
.window-buttons { display: flex; margin-left: auto; height: 28px; }
.window-buttons button { width: 46px; }
.toolbar { display: flex; align-items: center; padding: 4px 8px 2px 6px; }
.nav-buttons { display: flex; width: 134px; }
.nav-buttons button { width: 32px; }
.omnibox { flex: 1; display: flex; align-items: center; height: 28px; padding: 0 10px; border-radius: 14px; background: #202124; font-size: 14px; }
.insecure { margin-left: 8px; padding-right: 7px; margin-right: 9px; border-right: 1px solid #77787b; color: #f28b82; line-height: 16px; }
.url { color: #9aa0a6; }
.url s { color: #f28b82; }
.url b { color: #fff; font-weight: 400; }
.share { margin-left: auto; margin-right: 16px; }
.ext { width: 32px; }
.omnibox + .ext { margin-left: 6px; }
.avatar { width: 32px; }
.update { display: flex; align-items: center; gap: 14px; height: 28px; margin-left: 2px; padding: 0 11px; border: 1px solid #f2a199; border-radius: 14px; background: #473f42; color: #f2a199; }
.bookmarks { display: flex; align-items: center; gap: 16px; height: 34px; padding-left: 14px; white-space: nowrap; overflow: hidden; }
.bookmarks a { display: flex; align-items: center; gap: 8px; }
.bookmarks a:nth-child(n + 5) { margin-left: 1px; }

.app { position: relative; flex: 1; display: flex; flex-direction: column; overflow: hidden; background: linear-gradient(180deg, #2678ac 0, #1f6794 30%, #12386a 75%, #040c48 100%); }
.topbar { display: flex; align-items: center; justify-content: space-between; height: 35px; padding: 0 8px 0 10px; background: linear-gradient(90deg, #2a7cab, #164a78 40%, #2c7aa6 60%, #2574a4); color: #fff; }
.brand { display: flex; align-items: center; padding-bottom: 2px; font: 300 23px/24px "Open Sans", sans-serif; }
.brand b { font-weight: 700; }
.brand sup { align-self: flex-start; font-size: 8px; line-height: 12px; }
.brand span { margin-left: 3px; font-size: 21px; font-weight: 400; }
.account { display: flex; align-items: center; color: #e4e4e4; }
.account a { display: flex; align-items: center; gap: 6px; padding-right: 14px; margin-right: 14px; border-right: 1px solid #bbb; line-height: 10px; }
.search { display: flex; align-items: center; gap: 4px; width: 159px; height: 22px; padding: 0 6px; border-radius: 11px; background: #c8e6c8; color: #222; }
.search input { flex: 1; min-width: 0; border: 0; padding: 0; background: none; outline: none; }
.search input::placeholder { color: #777; }
.workspace { flex: 1; display: flex; gap: 6px; margin: 0 8px 10px; padding: 6px 5px 6px 6px; border-radius: 5px; background: #839dbb; }
.panel { background: #fff; border-radius: 4px; overflow: hidden; }
.panel h2 { display: flex; align-items: center; gap: 3px; height: 27px; padding: 0 7px 0 6px; border-bottom: 1px solid #999; background: linear-gradient(#dedee2, #b8b8bc); font: 700 12px/16px "Liberation Sans", "Noto Sans CJK SC", sans-serif; color: #333; }
.pin { margin-left: auto; margin-right: 4px; }
.navigator { width: 218px; background: #ebebeb; }
.tree li { display: flex; align-items: center; height: 23px; padding-right: 5px; }
.host-tree { padding: 4px 0 3px; border-bottom: 1px solid #999; margin-bottom: 3px; }
.host-tree .last { height: 29px; }
.tree .row-a { padding-left: 9px; }
.tree .row-a svg + svg, .tree .row-a .nub + svg { margin: 0 2px 0 4px; }
.tree .row-b { padding-left: 22px; height: 25px; font-weight: 700; color: #444; }
.tree .row-b svg + svg { margin: 0 7px; }
.tree .leaf { padding-left: 39px; }
.tree .deep { padding-left: 61px; height: 24px; }
.tree .chosen { background: #2b547e; color: #fff; font-weight: 700; }
.nub { width: 8px; flex: none; }
.faint { opacity: .3; }
.badge { width: 30px; height: 20px; margin-left: auto; padding-right: 3px; border-radius: 3px; background: #b4b4b4; color: #fff; text-align: right; line-height: 20px; font-weight: 700; }
.center { flex: 1; min-width: 0; display: flex; flex-direction: column; gap: 6px; }
.vm-panel { flex: 1; }
.vm-body { display: flex; flex-direction: column; padding: 23px 22px; }
.vm-search { align-self: flex-end; width: 157px; height: 24px; border: 1px solid #999; border-radius: 12px; background: #c8dfcf; }
.vm-grid { margin: 2px -1px 0 0; border: 1px solid #ccc; }
.vm-head { display: flex; justify-content: flex-end; align-items: center; height: 35px; padding-right: 5px; border-bottom: 1px solid #ccc; background: #f0f0f0; }
.vm-row { height: 25px; }
.vm-row.tint { background: #eaf5f0; }
.vm-foot { display: flex; justify-content: flex-end; align-items: center; gap: 3px; height: 40px; padding: 0 5px 6px; border-top: 1px solid #ccc; background: #f4f4f4; font-weight: 700; }
.vm-foot svg { align-self: flex-end; }
.tasks { height: 198px; background: #f4f4f4; }
.tasks table { width: 100%; border-collapse: collapse; table-layout: fixed; }
.tasks th, .tasks td { height: 24px; padding: 0 7px; border-right: 1px solid #ccc; text-align: left; font-weight: 400; white-space: nowrap; }
.tasks th { height: 25px; border-bottom: 1px solid #bbb; background: #f0f0f0; padding-right: 3px; color: #555; }
.tasks th span { display: flex; align-items: center; justify-content: space-between; }
.tasks tr > :last-child { border-right: 0; }
.tasks tr.tint { background: #eaf3ef; }
.c-name { width: 326px; }
.c-target { width: 250px; }
.c-user { width: 167px; }
.c-time { width: 200px; }
.result { display: flex; align-items: center; gap: 5px; color: #4c6a94; }

.veil { position: absolute; inset: 0; background: rgba(0, 0, 0, .6); }
.window { position: absolute; border: 1px solid #888; border-radius: 5px; background: #fff; box-shadow: 0 3px 9px rgba(0, 0, 0, .6); overflow: hidden; }
.title { display: flex; align-items: center; gap: 3px; height: 31px; padding: 0 10px; border-bottom: 1px solid #999; background: linear-gradient(#e2e2e6, #bbbbbf); font: 700 12px/16px "Liberation Sans", "Noto Sans CJK SC", sans-serif; color: #444; }
.actions { display: flex; justify-content: flex-end; align-items: center; gap: 8px; height: 42px; padding: 0 17px 3px; border-top: 1px solid #999; background: #d1d7df; }
.actions button { width: 70px; height: 25px; padding: 0; border: 1px solid #888; border-radius: 3px; background: linear-gradient(#fff, #e4e4e4); color: #333; }
.actions button:disabled { color: #999; border-color: #aaa; }
.resize { position: absolute; right: 2px; bottom: 2px; }

.wizard { left: 254px; top: 70px; width: 940px; }
.wizard-body { display: flex; height: 522px; }
.steps { position: relative; width: 230px; padding-top: 10px; background: #ebebeb; }
.art { position: absolute; inset: 0; width: 100%; height: 100%; }
.steps ol { position: relative; }
.steps li { display: flex; align-items: center; height: 21px; padding-left: 7px; color: #111; font-weight: 500; }
.steps .gap { width: 14px; }
.steps span { width: 189px; height: 21px; margin-left: 1px; padding-left: 6px; line-height: 21px; white-space: nowrap; border-radius: 4px; }
.steps .active span { background: #2c547e; color: #fff; font-weight: 700; }
.art-logo { position: absolute; left: 44px; bottom: 15px; display: flex; color: #fff; font: 400 36px/46px "Open Sans", sans-serif; }
.art-logo b { font-weight: 700; }
.art-logo sup { font-size: 8px; line-height: 34px; }
.wizard .actions { background: #d4d6de; }
.wizard .actions button:not(:disabled) { border-color: #777; }
.settings { flex: 1; min-width: 0; padding: 8px 10px 0; }
.settings h3 { font-size: 18px; line-height: 24px; color: #222; }
.settings p { padding: 6px 0; border-bottom: 1px solid #777; line-height: 16px; }
.scroller { display: flex; justify-content: space-between; margin: 20px 17px 0 10px; }
.grid { width: 641px; border: 1px solid #c0c0c0; border-top: 0; }
.row { display: flex; height: 41px; border-top: 1px solid #c4c4c4; }
.row.cut { height: 8px; border-top: 0; }
.row.status { height: 43px; }
.row.medium { height: 40px; }
.row.short { height: 28px; }
.name { display: flex; align-items: center; gap: 4px; width: 220px; height: 100%; padding: 0 0 14px 4px; background: #dceaf0; color: #333; }
.row.short .name { padding-bottom: 2px; }
.row.cut .name { padding: 0; }
.fresh .name { background: #fcf8c0; }
.name.sub { padding-left: 36px; }
.value { flex: 1; display: flex; align-items: center; gap: 5px; padding-left: 6px; }
.row.short .value { padding-bottom: 2px; }
.status .value { padding-bottom: 6px; }
.row.cut .value { align-items: flex-start; gap: 15px; }
.cut-field { width: 70px; height: 3px; border: 1px solid #666; border-top: 0; background: #c8edd2; }
.cut-select { width: 100px; height: 3px; border: 1px solid #bbb; border-top: 0; border-radius: 0 0 3px 3px; }
.pick { display: grid; align-items: center; }
.pick > * { grid-area: 1 / 1; }
.pick select { width: 100%; height: 30px; padding: 0 8px 1px; appearance: none; border: 1px solid #bbb; border-radius: 3px; background: #fff; color: #555; }
.pick svg { justify-self: end; margin-right: 5px; pointer-events: none; }
.wide { width: 300px; }
.half { width: 149px; }
.tick { display: flex; align-items: center; gap: 3px; white-space: nowrap; }
.tick input { width: 13px; height: 13px; margin: 0; }
.media { width: 300px; height: 22px; padding: 0 4px; border: 1px solid #d00000; background: #c8edd2; }
.browse { height: 22px; margin-left: 7px; padding: 0 7px; border: 1px solid #555; border-radius: 2px; background: #f0f0f0; white-space: nowrap; }
.thumb { align-self: flex-end; width: 8px; height: 220px; margin-bottom: -8px; border-radius: 4px; background: #b4b4b4; }

.picker { left: 1085px; top: 93px; width: 720px; }
.picker .title { padding-left: 5px; }
.tools { display: flex; align-items: center; gap: 14px; height: 32px; padding: 2px 0 0 10px; border-bottom: 1px solid #ccc; }
.tools button { display: flex; align-items: center; gap: 4px; padding: 0; border: 0; background: none; }
.rule { width: 1px; height: 16px; background: #999; margin-right: -2px; }
.columns { display: flex; height: 284px; }
.col { width: 159px; border-right: 1px solid #e6e6e6; }
.col.inset { width: 162px; padding-left: 3px; }
.col button { display: flex; align-items: center; gap: 4px; width: 100%; height: 24px; padding: 0 0 0 10px; border: 0; background: none; white-space: nowrap; }
.col .picked { background: #2b547e; color: #fff; }
.col .current { background: #5f7e9f; color: #fff; }
.grip { display: flex; flex-direction: column; justify-content: flex-end; align-items: center; width: 16px; padding-bottom: 5px; border-right: 1px solid #e6e6e6; }
.grip i { width: 7px; height: 12px; border: solid #555; border-width: 0 1px; background: linear-gradient(90deg, transparent 2px, #555 2px, #555 3px, transparent 3px); }
.detail { display: flex; flex-direction: column; align-items: center; width: 161px; padding: 10px 0 0 2px; border-right: 1px solid #e6e6e6; line-height: 17px; }
.detail svg { margin-bottom: 7px; }
.detail .date { padding-right: 8px; }
.path { display: flex; align-items: center; gap: 7px; height: 30px; padding: 2px 0 0 3px; border-top: 1px solid #e0e0e0; }
.picker .actions { gap: 6px; padding: 0 8px 3px; }
.picker .actions button { height: 23px; }

.mark { position: absolute; border: 2px solid #ed1c24; pointer-events: none; }
.mark-drive { left: 723px; top: 354px; width: 343px; height: 46px; }
.mark-browse { left: 1039px; top: 435px; width: 46px; height: 41px; border-right-width: 1px; }
.mark-file { left: 1446px; top: 224px; width: 172px; height: 31px; }
.mark-select { left: 1637px; top: 474px; width: 90px; height: 34px; }

.monitor { position: absolute; left: 1662px; top: 398px; width: 151px; height: 72px; font-family: "Noto Sans", "Noto Sans CJK SC", sans-serif; font-size: 11px; }
.stats { position: absolute; left: 38px; top: 18px; width: 112px; height: 41px; padding: 2px 31px 0 33px; border-radius: 21px; background: #f5f5f5; box-shadow: 0 0 4px rgba(0, 0, 0, .3); color: #111; line-height: 18px; white-space: nowrap; }
.net { display: flex; align-items: center; justify-content: space-between; font-size: 10px; }
.cpu { color: #666; font-size: 11px; }
.cpu b { color: #16c55a; font-weight: 400; }
.add { position: absolute; right: 5px; top: 7px; }
.ball { position: absolute; left: 0; top: 0; }
.load { position: absolute; left: 9px; top: 20px; width: 50px; display: flex; align-items: baseline; justify-content: center; color: #222; font: 300 22px/32px "Open Sans", sans-serif; }
.load small { font-size: 12px; font-weight: 400; }
.watermark { position: absolute; right: 16px; bottom: 7px; color: #b4b4b4; font: 17px/24px "Noto Sans CJK SC", sans-serif; text-shadow: 1px 1px 1px #000; }
</style>
